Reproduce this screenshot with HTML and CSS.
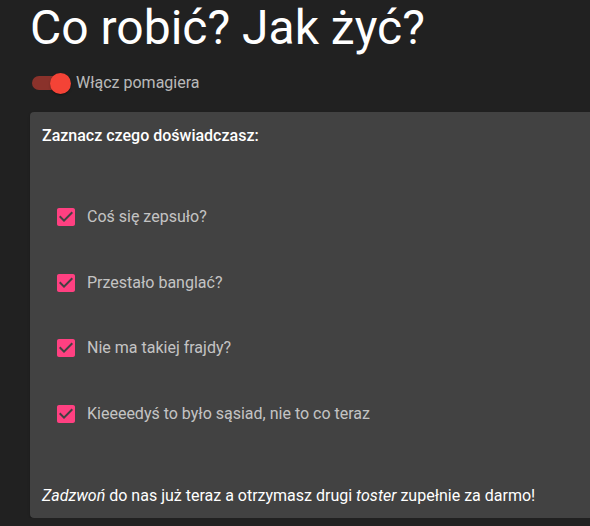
FILE: index.html
```html
<!DOCTYPE html>
<html lang="pl">
  <head>
    <meta charset="UTF-8" />
    <meta name="viewport" content="width=device-width, initial-scale=1.0" />
    <title>Co robić? Jak żyć?</title>
    <link rel="stylesheet" href="styles.css">
  </head>
  <body>
    <div class="container">
      <h1 class="title">Co robić? Jak żyć?</h1>

      <label class="switch-label">
        <span class="switch">
          <span class="switch-track"></span>
          <span class="switch-thumb"></span>
        </span>
        <span class="switch-text">Włącz pomagiera</span>
      </label>

      <div class="card">
        <div class="card-title">Zaznacz czego doświadczasz:</div>

        <div class="options">
          <label class="option">
            <span class="checkbox">
              <svg viewBox="0 0 24 24" width="24" height="24">
                <path d="M19 3H5c-1.11 0-2 .9-2 2v14c0 1.1.89 2 2 2h14c1.11 0 2-.9 2-2V5c0-1.1-.89-2-2-2zm-9 14l-5-5 1.41-1.41L10 14.17l7.59-7.59L19 8l-9 9z" />
              </svg>
            </span>
            <span class="option-text">Coś się zepsuło?</span>
          </label>
          <label class="option">
            <span class="checkbox">
              <svg viewBox="0 0 24 24" width="24" height="24">
                <path d="M19 3H5c-1.11 0-2 .9-2 2v14c0 1.1.89 2 2 2h14c1.11 0 2-.9 2-2V5c0-1.1-.89-2-2-2zm-9 14l-5-5 1.41-1.41L10 14.17l7.59-7.59L19 8l-9 9z" />
              </svg>
            </span>
            <span class="option-text">Przestało banglać?</span>
          </label>
          <label class="option">
            <span class="checkbox">
              <svg viewBox="0 0 24 24" width="24" height="24">
                <path d="M19 3H5c-1.11 0-2 .9-2 2v14c0 1.1.89 2 2 2h14c1.11 0 2-.9 2-2V5c0-1.1-.89-2-2-2zm-9 14l-5-5 1.41-1.41L10 14.17l7.59-7.59L19 8l-9 9z" />
              </svg>
            </span>
            <span class="option-text">Nie ma takiej frajdy?</span>
          </label>
          <label class="option">
            <span class="checkbox">
              <svg viewBox="0 0 24 24" width="24" height="24">
                <path d="M19 3H5c-1.11 0-2 .9-2 2v14c0 1.1.89 2 2 2h14c1.11 0 2-.9 2-2V5c0-1.1-.89-2-2-2zm-9 14l-5-5 1.41-1.41L10 14.17l7.59-7.59L19 8l-9 9z" />
              </svg>
            </span>
            <span class="option-text">Kieeeedyś to było sąsiad, nie to co teraz</span>
          </label>
        </div>

        <p class="footer-text">
          <em>Zadzwoń</em> do nas już teraz a otrzymasz drugi <em>toster</em> zupełnie za darmo!
        </p>
      </div>
    </div>
  </body>
</html>
```

FILE: styles.css
```css
* {
  box-sizing: border-box;
}

html {
  overflow: hidden;
}

body {
  margin: 0;
  background: #212121;
  color: #fff;
  font-family: Roboto, "Liberation Sans", sans-serif;
  font-size: 16px;
  line-height: 1.5;
}

.container {
  padding-left: 30px;
}

.title {
  margin: 0;
  font-size: 48px;
  font-weight: 400;
  line-height: 56px;
}

.switch-label {
  display: flex;
  align-items: center;
  margin-top: 8px;
  margin-left: -10px;
  height: 38px;
}

.switch {
  position: relative;
  width: 56px;
  height: 38px;
  padding: 12px;
  display: inline-block;
}

.switch-track {
  display: block;
  width: 34px;
  height: 14px;
  border-radius: 7px;
  background: #f44336;
  opacity: 0.5;
}

.switch-thumb {
  position: absolute;
  top: 9px;
  left: 30px;
  width: 21px;
  height: 21px;
  border-radius: 50%;
  background: #f44336;
  box-shadow: 0 2px 1px -1px rgba(0, 0, 0, 0.2), 0 1px 1px 0 rgba(0, 0, 0, 0.14),
    0 1px 3px 0 rgba(0, 0, 0, 0.12);
}

.switch-text {
  color: rgba(255, 255, 255, 0.7);
}

.card {
  margin-top: 10px;
  width: 600px;
  background: #424242;
  border-radius: 4px;
  padding: 12px 12px 10px;
  box-shadow: 0 2px 1px -1px rgba(0, 0, 0, 0.2), 0 1px 1px 0 rgba(0, 0, 0, 0.14),
    0 1px 3px 0 rgba(0, 0, 0, 0.12);
}

.card-title {
  font-weight: 500;
}

.options {
  display: flex;
  flex-direction: column;
  gap: 23.7px;
  margin-top: 48px;
  padding-left: 3px;
}

.option {
  display: flex;
  align-items: center;
  height: 42px;
}

.checkbox {
  display: inline-flex;
  padding: 9px;
}

.checkbox svg {
  fill: #ff4081;
}

.option-text {
  color: rgba(255, 255, 255, 0.7);
}

.footer-text {
  margin: 49px 0 0;
}
```
